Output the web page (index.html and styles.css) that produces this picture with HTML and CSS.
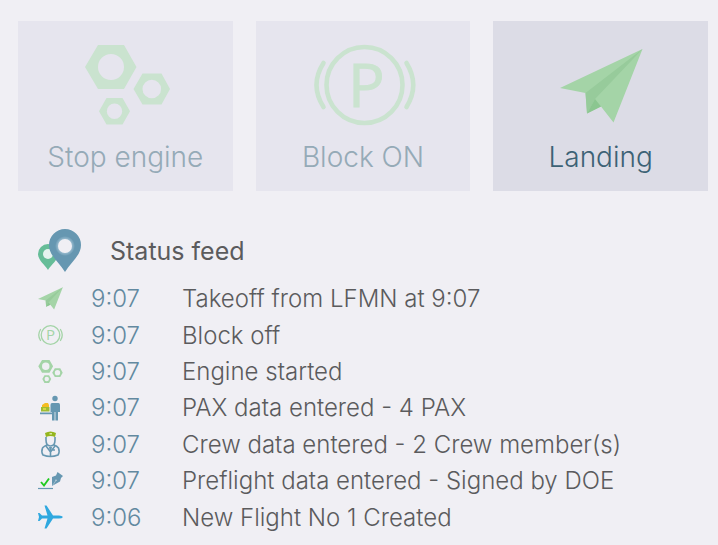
FILE: index.html
```
<!DOCTYPE html>
<html lang="en">
<head>
<meta charset="utf-8">
<title>Flight status</title>
<link rel="stylesheet" href="styles.css">
</head>
<body>
<svg class="defs" aria-hidden="true">
  <symbol id="nuts" viewBox="84 44 87 82">
    <path fill-rule="evenodd" d="M85 67 98 45H124L136.500 67 124 89H98ZM98 67a13 13 0 1 0 26 0a13 13 0 1 0-26 0ZM133.500 89 142.500 73.500H161.500L170 89 161.500 104.500H142.500ZM142.500 89a9.300 9.300 0 1 0 18.600 0a9.300 9.300 0 1 0-18.600 0ZM99 111.300 106.500 98H122.500L130 111.300 122.500 124.600H106.500ZM106.800 111.300a7.700 7.700 0 1 0 15.400 0a7.700 7.700 0 1 0-15.400 0Z"/>
  </symbol>
  <symbol id="plane" viewBox="560 48 83 76">
    <path fill="#a4d4a7" d="M642.500 49 560 88 585.500 93 587 113.500 601 106.500 613.500 122.500Z"/>
    <path fill="#97cb9b" d="M642.500 49 585.500 93 587 113.500 595 99Z"/>
    <path fill="#8bc690" d="M587 113.500 595 99 601 106.500Z"/>
  </symbol>
</svg>
<main class="page">
  <div class="actions">
    <button class="action" type="button" disabled>
      <svg class="action-icon" viewBox="70 45 110 80" aria-hidden="true"><use href="#nuts" x="84" y="44" width="87" height="82"/></svg>
      <span>Stop engine</span>
    </button>
    <button class="action" type="button" disabled>
      <svg class="action-icon" viewBox="308 45 110 80" aria-hidden="true">
        <g class="outline" stroke-width="4.600"><circle cx="364.500" cy="85" r="38"/><path d="M323.500 63Q309.500 85 323.500 107M406.500 63Q420 85 406.500 107"/></g>
        <text class="park" x="348" y="107" font-size="61">P</text>
      </svg>
      <span>Block ON</span>
    </button>
    <button class="action" type="button">
      <svg class="action-icon" viewBox="546 45 110 80" aria-hidden="true"><use href="#plane" x="560" y="48" width="83" height="76"/></svg>
      <span>Landing</span>
    </button>
  </div>

  <section class="feed" aria-labelledby="feed-title">
    <header class="feed-header">
      <svg class="feed-pin" viewBox="0 0 44 44" aria-hidden="true">
        <defs><radialGradient id="glow"><stop offset=".6" stop-color="#a6c5d7"/><stop offset="1" stop-color="#6697b1"/></radialGradient></defs>
        <path fill="#66bd98" d="M10 41C7 36 0 31 0 25a10 10 0 0 1 20 0C20 31 13 36 10 41Z"/>
        <circle cx="10" cy="25" r="5" fill="#e5f3ef"/>
        <path fill="#6697b1" d="M27 43C22 34 11 27 11 16a16 16 0 0 1 32 0C43 27 32 34 27 43Z"/>
        <circle cx="27" cy="17" r="10" fill="url(#glow)"/>
        <circle cx="27" cy="17" r="7" fill="#f0eff4"/>
      </svg>
      <h1 id="feed-title">Status feed</h1>
    </header>
    <ol class="events">
      <li class="event">
        <svg class="event-icon" viewBox="0 0 26 26" aria-hidden="true"><use href="#plane" x="0" y="1" width="25" height="23"/></svg>
        <time>9:07</time><span>Takeoff from LFMN at 9:07</span>
      </li>
      <li class="event">
        <svg class="event-icon" viewBox="0 0 26 26" aria-hidden="true">
          <g class="outline" stroke-width="1.300"><circle cx="12.500" cy="12" r="9.300"/><path d="M2.500 6.500Q-1 12 2.500 17.500M22.500 6.500Q26 12 22.500 17.500"/></g>
          <text class="park" x="8" y="17.300" font-size="15">P</text>
        </svg>
        <time>9:07</time><span>Block off</span>
      </li>
      <li class="event">
        <svg class="event-icon nuts" viewBox="0 0 26 26" aria-hidden="true"><use href="#nuts" x="0" y="0" width="25" height="25"/></svg>
        <time>9:07</time><span>Engine started</span>
      </li>
      <li class="event">
        <svg class="event-icon" viewBox="0 0 26 26" aria-hidden="true">
          <path fill="#6697b1" d="M2 17.500H14V19.200H2ZM14 8Q12.500 8 12.500 10V17H14V25.500H16.600V17H17.400V25.500H20V17H22V10Q22 8 20.500 8Z"/>
          <circle cx="17" cy="3.500" r="2.700" fill="#6697b1"/>
          <path fill="#f5bd22" d="M4 12V10L7 8H10L11 10V12Z"/>
          <path fill="#a0bd31" d="M3 12H11.500V16.500H3Z"/>
          <path fill="#d4d743" d="M5 13H8V15H5Z"/>
        </svg>
        <time>9:07</time><span>PAX data entered - 4 PAX</span>
      </li>
      <li class="event">
        <svg class="event-icon" viewBox="0 0 26 26" aria-hidden="true">
          <g fill="none" stroke="#6697b1" stroke-width="1.600">
            <path d="M8 5V8Q8 14 12.500 14T17 8V5M9 13Q5 15 4.500 16Q3 20 5 23Q12.500 26 20 23Q22 20 20.500 16Q19 14 16 13"/>
            <path d="M8 14 12.500 20 17 14M12.500 19V24M14.500 18H17"/>
          </g>
          <path fill="#6697b1" d="M11 15H14L13 20H12Z"/>
          <path fill="#94b61e" d="M7 1Q12.500-2 18 1L17 5Q12.500 3 8 5Z"/>
          <path fill="#d9e79d" d="M11.500 1H14V2.500H11.500Z"/>
        </svg>
        <time>9:07</time><span>Crew data entered - 2 Crew member(s)</span>
      </li>
      <li class="event">
        <svg class="event-icon" viewBox="0 0 26 26" aria-hidden="true">
          <path d="M0 20.500H15" stroke="#6697b1" stroke-width="1.200"/>
          <path d="M3 14 6 17.500 11 10.500" fill="none" stroke="#20ca20" stroke-width="1.900"/>
          <path fill="#6697b1" d="M14 18 14 9 18 7.500 19.500 4 25 8 23 10 22 13.500Z"/>
          <path d="M14.500 17.500 18 12.500" stroke="#c5d6e0" stroke-width=".6"/>
          <circle cx="18" cy="12.300" r=".8" fill="#c5d6e0"/>
        </svg>
        <time>9:07</time><span>Preflight data entered - Signed by DOE</span>
      </li>
      <li class="event">
        <svg class="event-icon" viewBox="0 0 26 26" aria-hidden="true">
          <path fill="#2fa8df" d="M25 12Q24 10.500 21 10.500H15L8.500 .5H6.500L9.500 10.500H4L1.500 8H0L1 12 0 16H1.500L4 13.500H9.500L6.500 23.500H8.500L15 13.500H21Q24 13.500 25 12Z"/>
        </svg>
        <time>9:06</time><span>New Flight No 1 Created</span>
      </li>
    </ol>
  </section>
</main>
</body>
</html>
```
FILE: styles.css
```
* { box-sizing: border-box; }

body {
  margin: 0;
  background: #f0eff4;
  color: #5b5b5d;
  font-family: Inter, "Liberation Sans", sans-serif;
}

.defs { position: absolute; width: 0; height: 0; }

.page {
  display: flex;
  flex-direction: column;
  min-height: 100vh;
  padding: 21px 10px 9px 18px;
}

.actions {
  display: grid;
  grid-template-columns: repeat(3, 1fr);
  gap: 23px;
}

.action {
  display: flex;
  flex-direction: column;
  align-items: center;
  gap: 16px;
  padding: 24px 0 18px;
  border: 0;
  background: #dcdce6;
  color: #3c6275;
  font: 300 28px/32px Inter, "Liberation Sans", sans-serif;
}

.action:disabled {
  background: #e6e5ee;
  color: #95aab7;
}

.action-icon {
  width: 110px;
  height: 80px;
  overflow: visible;
  fill: #cae3cf;
}

.outline {
  fill: none;
  stroke: #a4d4a7;
  stroke-linecap: round;
}

.park {
  fill: #a4d4a7;
  font-family: "Open Sans", sans-serif;
  font-weight: 400;
}

.action .outline { stroke: #cae3cf; }
.action .park { fill: #cae3cf; stroke: #cae3cf; }

.feed {
  display: flex;
  flex: 1;
  flex-direction: column;
  padding: 38px 20px 0;
}

.feed-header {
  display: flex;
  align-items: center;
  gap: 28px;
}

.feed-pin {
  width: 44px;
  height: 44px;
}

h1 {
  margin: 0;
  font-size: 25px;
  font-weight: 400;
  line-height: 32px;
}

.events {
  display: grid;
  flex: 1;
  grid-auto-rows: 1fr;
  margin: 8px 0 0;
  padding: 0;
  list-style: none;
}

.event {
  display: grid;
  grid-template-columns: 53px 91px 1fr;
  align-items: center;
  font-size: 24px;
  font-weight: 300;
  line-height: 32px;
}

.event time { color: #6289a0; }

.event-icon {
  width: 26px;
  height: 26px;
  overflow: visible;
}

.nuts { fill: #a4d4a7; }
```
